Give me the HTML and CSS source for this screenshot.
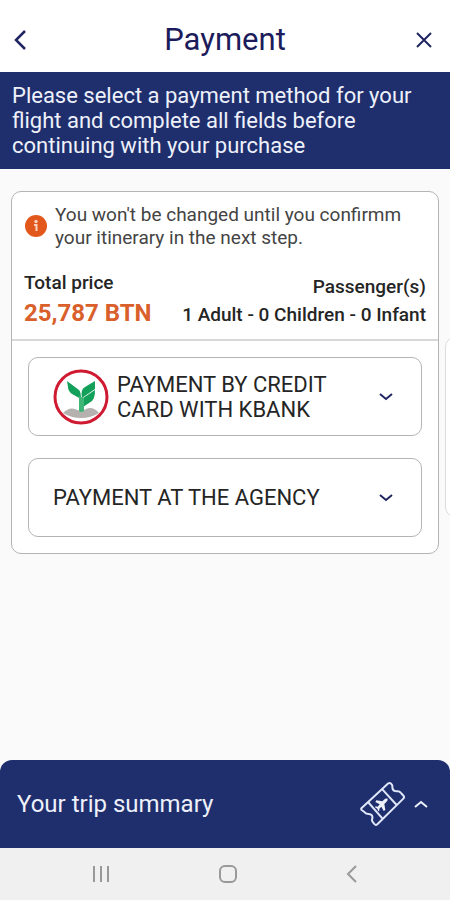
FILE: index.html
```html
<!DOCTYPE html>
<html lang="en">
	<head>
		<meta charset="UTF-8">
		<meta name="viewport" content="width=device-width, initial-scale=1">
		<title>Payment</title>
		<link rel="stylesheet" href="styles.css">
	</head>
	<body>
		<header class="topbar">
			<button type="button" class="icon-btn" aria-label="Back">
				<svg width="14" height="22" viewBox="0 0 14 22"><path d="M11 2L2 11l9 9"/></svg>
			</button>
			<h1>Payment</h1>
			<button type="button" class="icon-btn close" aria-label="Close">
				<svg width="16" height="16" viewBox="0 0 16 16"><path d="M1 1l14 14M15 1L1 15"/></svg>
			</button>
		</header>
		<p class="banner">Please select a payment method for your flight and complete all fields before continuing with your purchase</p>

		<main class="slides">
			<section class="card">
				<div class="notice">
					<svg width="22" height="22" viewBox="0 0 22 22">
						<circle cx="11" cy="11" r="11" fill="#e2581c"/>
						<circle cx="11" cy="6.5" r="1.7" fill="#fbd3c0"/>
						<path d="M9 10h2.5v6" fill="none" stroke="#fbd3c0" stroke-width="2"/>
					</svg>
					<p>You won't be changed until you confirmm your itinerary in the next step.</p>
				</div>
				<div class="total">
					<div class="price">
						<span>Total price</span>
						<strong>25,787 BTN</strong>
					</div>
					<div class="people">
						<span>Passenger(s)</span>
						<span>1 Adult - 0 Children - 0 Infant</span>
					</div>
				</div>
				<div class="methods">
					<button type="button" class="method">
						<svg class="logo" width="56" height="56" viewBox="0 0 56 56">
							<circle cx="28" cy="28" r="25" fill="#fff"/>
							<path d="M10 44q6-6 12-4q6 3 11 0q7-3 13 4q-8 5-18 5t-18-5z" fill="#b5b1ae"/>
							<path d="M14 12l12 9q2 2 2 9l-9-5q-4-3-4-7z" fill="#12a05a"/>
							<path d="M42 12v8l-13 9q-2-8 3-11z" fill="#12a05a"/>
							<path d="M42 21q0 8-3 11l-9 6v-9z" fill="#12a05a"/>
							<path d="M26 27l5 2v13q-3 2-5 0z" fill="#3fb578"/>
							<circle cx="28" cy="28" r="26" fill="none" stroke="#cf1a31" stroke-width="3"/>
						</svg>
						<span>PAYMENT BY CREDIT CARD WITH KBANK</span>
						<svg class="arrow" width="14" height="8" viewBox="0 0 14 8"><path d="M1 1l6 5 6-5"/></svg>
					</button>
					<button type="button" class="method">
						<span>PAYMENT AT THE AGENCY</span>
						<svg class="arrow" width="14" height="8" viewBox="0 0 14 8"><path d="M1 1l6 5 6-5"/></svg>
					</button>
				</div>
			</section>
			<section class="card next"></section>
		</main>

		<button type="button" class="summary">
			<span>Your trip summary</span>
			<svg class="ticket" width="46" height="46" viewBox="30 18 138 138">
				<path d="M35 99L115 25q6-3 10 3q3 4 2 9q1 12 14 12q7-1 11 4l9 10q3 4-1 8L82 148q-5 4-9-1l-6-8q-2-4 0-9q2-12-11-13q-8 0-12-5l-9-7q-3-3 0-6z"/>
				<path d="M97 43l43 47M54 81l43 49"/>
				<path class="plane" d="M113 71q-6-2-11 3l-5 5-18-3-3 5 13 7-6 7-6-1-2 3 7 4 3 8 3-2v-6l6-6 7 13 5-3-3-18 6-6q5-5 4-10z"/>
			</svg>
			<svg class="arrow" width="14" height="8" viewBox="0 0 14 8"><path d="M1 7l6-5 6 5"/></svg>
		</button>
		<nav class="sysnav">
			<button type="button" aria-label="Recent apps">
				<svg width="18" height="20" viewBox="0 0 18 20"><path d="M2 2v16M9 2v16M16 2v16"/></svg>
			</button>
			<button type="button" aria-label="Home">
				<svg width="18" height="18" viewBox="0 0 18 18"><rect x="1" y="1" width="16" height="16" rx="5"/></svg>
			</button>
			<button type="button" aria-label="Back">
				<svg width="12" height="18" viewBox="0 0 12 18"><path d="M10 1L2 9l8 8"/></svg>
			</button>
		</nav>
	</body>
</html>
```
FILE: styles.css
```css
*{
	box-sizing: border-box;
}
body,h1,p{
	margin: 0;
}
body{
	display: flex;
	flex-direction: column;
	min-height: 100vh;
	background: #fafafa;
	color: #252525;
	font-family: Roboto, sans-serif;
}
button{
	padding: 0;
	border: 0;
	background: none;
	color: inherit;
	font: inherit;
	text-align: left;
	cursor: pointer;
}
svg{
	display: block;
	flex: none;
}
.topbar{
	display: flex;
	align-items: center;
	justify-content: space-between;
	padding: 20px 14px 12px;
	background: #fff;
	color: #1c1c5c;
}
.topbar h1{
	font-size: 31px;
	line-height: 40px;
	font-weight: 400;
}
.icon-btn{
	display: flex;
	width: 24px;
}
.icon-btn svg{
	fill: none;
	stroke: #1f2560;
	stroke-width: 2.5;
}
.close{
	justify-content: center;
}
.close svg{
	stroke-width: 2;
}
.banner{
	padding: 11px 12px;
	background: #1f2f6e;
	color: #eef1fa;
	font-size: 22px;
	line-height: 25px;
}
.slides{
	display: flex;
	flex: 1;
	align-items: flex-start;
	gap: 6px;
	padding: 22px 11px;
	overflow: hidden;
}
.card{
	flex: none;
	width: 100%;
	border: 1px solid #b4b4b4;
	border-radius: 10px;
	background: #fff;
}
.next{
	height: 180px;
	margin-top: 146px;
	border-color: #dcdcdc;
}
.notice{
	display: flex;
	align-items: center;
	gap: 8px;
	padding: 11px 12px 10px 13px;
	color: #444;
	font-size: 19px;
	line-height: 23px;
}
.notice p{
	flex: 1;
}
.total{
	display: flex;
	align-items: flex-end;
	justify-content: space-between;
	padding: 10px 12px;
	border-bottom: 2px solid #d8d8d8;
	font-size: 19px;
	font-weight: 500;
}
.price,.people{
	display: flex;
	flex-direction: column;
	line-height: 28px;
}
.people{
	text-align: right;
}
.price strong{
	color: #d9602b;
	font-size: 24px;
	line-height: 32px;
	font-weight: 700;
}
.methods{
	display: flex;
	flex-direction: column;
	gap: 22px;
	padding: 16px;
}
.method{
	display: flex;
	align-items: center;
	gap: 8px;
	width: 100%;
	min-height: 79px;
	padding: 0 28px 0 24px;
	border: 1px solid #b4b4b4;
	border-radius: 10px;
	font-size: 22px;
	line-height: 25px;
}
.method span{
	flex: 1;
}
.arrow{
	fill: none;
	stroke: #1f2560;
	stroke-width: 2;
}
.summary{
	display: flex;
	align-items: center;
	gap: 8px;
	min-height: 88px;
	padding: 0 22px 0 17px;
	border-radius: 12px 12px 0 0;
	background: #1f2f6e;
	color: #eef1fa;
	font-size: 24px;
}
.summary span{
	flex: 1;
}
.summary .arrow{
	stroke: #eef1fa;
}
.ticket{
	fill: none;
	stroke: #dfe6f8;
	stroke-width: 6;
	stroke-linejoin: round;
}
.ticket .plane{
	fill: #eef1fa;
	stroke: none;
}
.sysnav{
	display: flex;
	align-items: center;
	justify-content: space-between;
	min-height: 52px;
	padding: 0 92px;
	background: #f0f0f0;
}
.sysnav svg{
	fill: none;
	stroke: #999;
	stroke-width: 2;
}
```
